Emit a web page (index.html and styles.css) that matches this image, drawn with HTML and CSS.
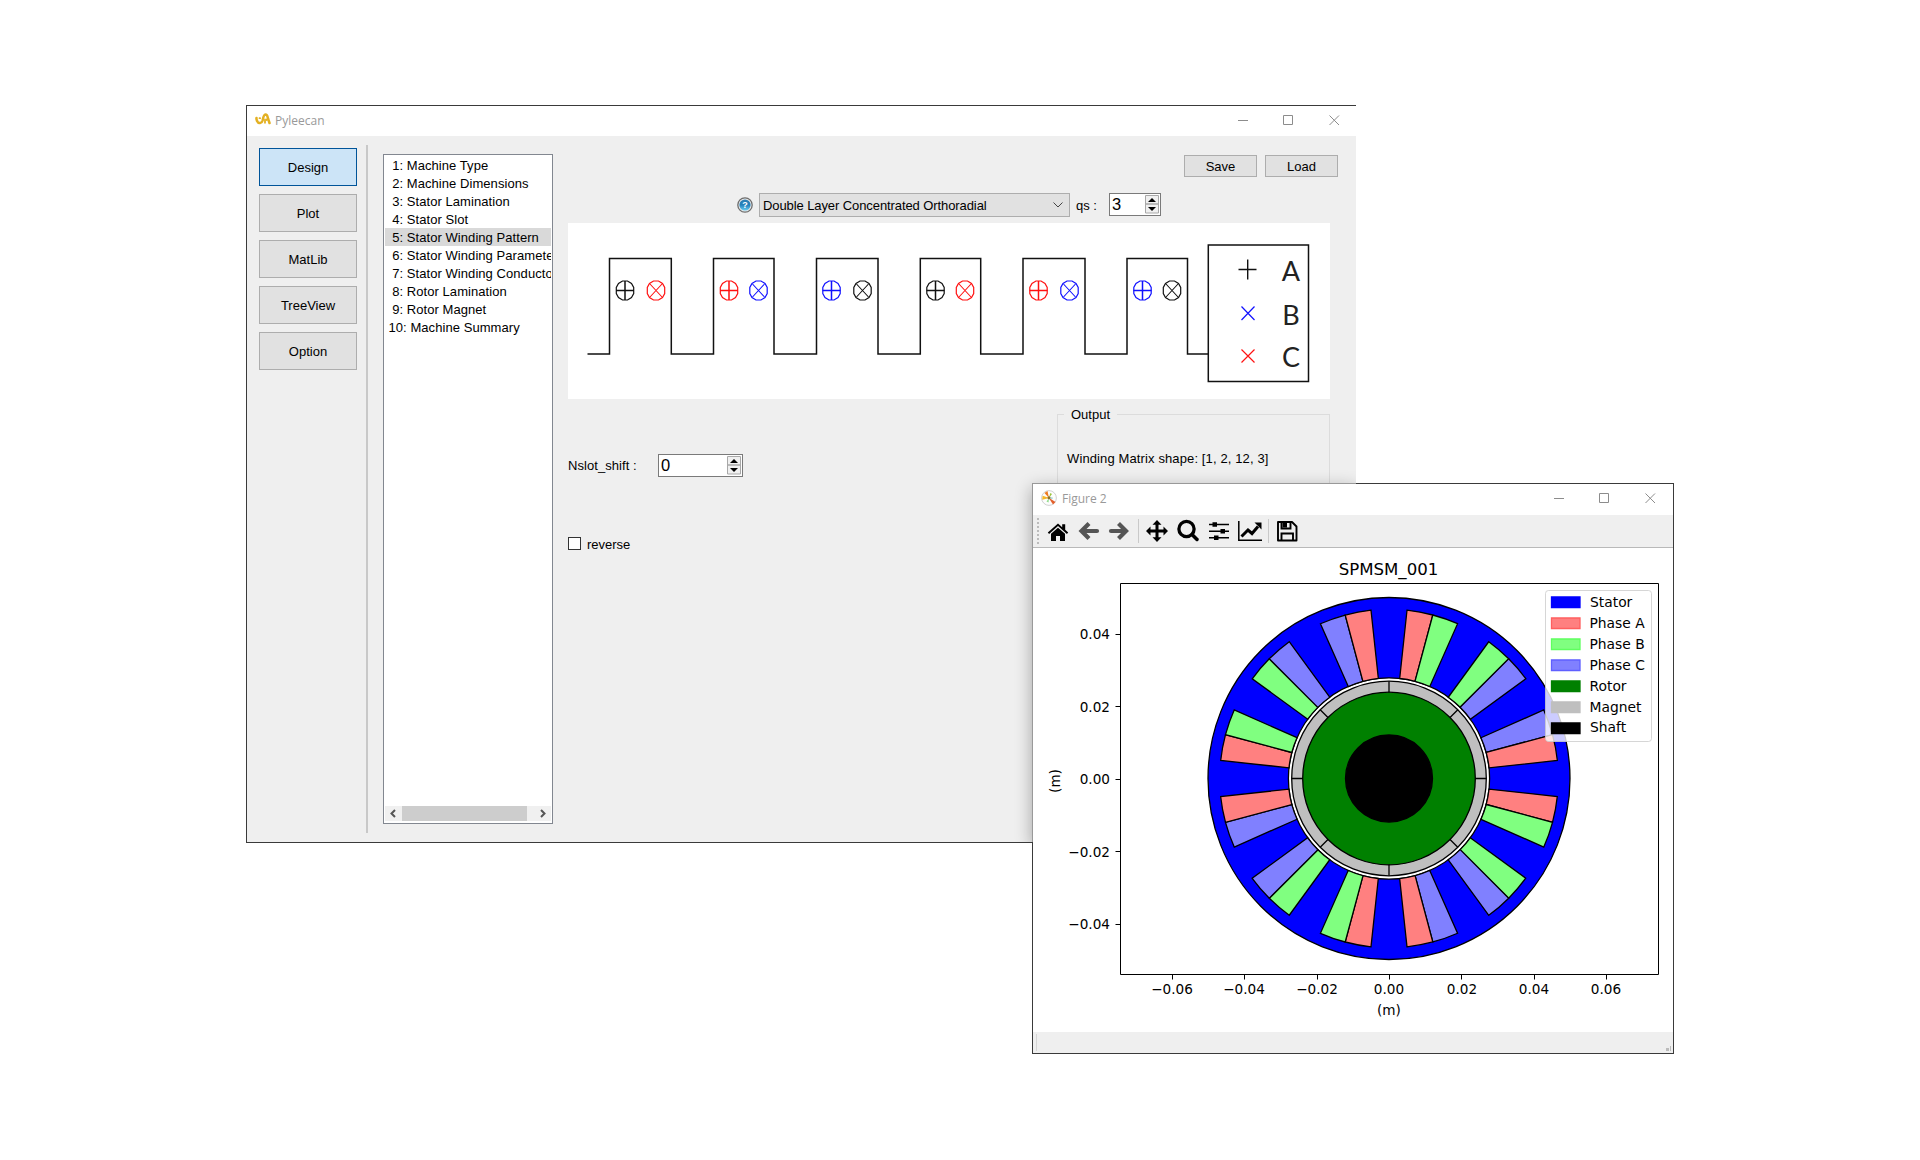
FILE: index.html
```html
<!DOCTYPE html>
<html lang="en">
<head>
<meta charset="utf-8">
<title>Pyleecan</title>
<link rel="stylesheet" href="styles.css">
</head>
<body>
<div class="desktop">

<section class="window main-window">
  <header class="titlebar">
    <svg class="app-icon" width="16" height="14" viewBox="0 0 16 14" fill="none" stroke="#e3b022" stroke-linecap="round">
      <path d="M1.500 5C1.300 6.500 1.500 7 2 7.500M2 8C3.500 11.200 6.800 10.500 7.600 7.500C8.200 4.500 8.600 1.800 10.500 1.600C12.300 1.500 12.500 3.500 13 5.500L14.500 10" stroke-width="2.500"/>
      <path d="M10 6.500v3.300M11.800 6.500v.6" stroke-width="1.800"/><path d="M4.500 5.200h.6" stroke-width="1.800"/>
    </svg>
    <h1 class="title">Pyleecan</h1>
    <svg class="controls" width="102" height="11" viewBox="0 0 102 11" fill="none" stroke="#8c8c8c"><path d="M0 5.500h10M45.500 .5h9v9h-9zM91.500 .5l9.500 9.500M101 .5l-9.500 9.500"/></svg>
  </header>
  <div class="body">
    <nav class="nav">
      <button class="btn active">Design</button>
      <button class="btn">Plot</button>
      <button class="btn">MatLib</button>
      <button class="btn">TreeView</button>
      <button class="btn">Option</button>
    </nav>
    <div class="divider"></div>
    <div class="steps">
      <ul class="step-list">
        <li> 1: Machine Type</li>
        <li> 2: Machine Dimensions</li>
        <li> 3: Stator Lamination</li>
        <li> 4: Stator Slot</li>
        <li class="selected"> 5: Stator Winding Pattern</li>
        <li> 6: Stator Winding Parameters</li>
        <li> 7: Stator Winding Conductor</li>
        <li> 8: Rotor Lamination</li>
        <li> 9: Rotor Magnet</li>
        <li>10: Machine Summary</li>
      </ul>
      <div class="scrollbar">
        <svg width="17" height="15" viewBox="0 0 17 15" fill="none" stroke="#555" stroke-width="2"><path d="M10 4L6.500 7.500 10 11"/></svg>
        <div class="thumb"></div>
        <svg class="right" width="17" height="15" viewBox="0 0 17 15" fill="none" stroke="#555" stroke-width="2"><path d="M7 4l3.500 3.500L7 11"/></svg>
      </div>
    </div>
    <div class="content">
      <div class="actions"><button class="btn">Save</button><button class="btn">Load</button></div>
      <div class="pattern-row">
        <svg class="help" width="16" height="16" viewBox="0 0 16 16">
          <defs><linearGradient id="ball" x2="0" y2="1"><stop stop-color="#2f7fb4"/><stop offset=".5" stop-color="#2580ba"/><stop offset="1" stop-color="#6cd0f4"/></linearGradient></defs>
          <circle cx="8" cy="8" r="7.200" fill="#e9e9e9" stroke="#6e6e6e" stroke-width="1.300"/>
          <circle cx="8" cy="8" r="5.600" fill="url(#ball)"/>
          <text x="8" y="11" text-anchor="middle" class="help-mark">?</text>
        </svg>
        <div class="combo"><span>Double Layer Concentrated Orthoradial</span>
          <svg width="10" height="6" viewBox="0 0 10 6" fill="none" stroke="#444"><path d="M.5 .5L5 5 9.500 .5"/></svg></div>
        <label class="qs">qs :</label>
        <div class="spin small"><span>3</span>
          <svg width="14" height="19" viewBox="0 0 14 19"><path d="M.5 .5h13v8.500h-13zM.5 9h13v9h-13z" fill="#f0f0f0" stroke="#a8a8a8"/><path d="M3 7l4-4 4 4zM3 12h8l-4 4z"/></svg></div>
      </div>
      <svg class="winding" width="762" height="176" viewBox="568 223 762 176">
        <defs>
          <g id="ring"><path d="M-2.500-9.500h5L6.500-7 8.700-3V3L6.500 7 2.500 9.500h-5L-6.500 7-8.700 3V-3L-6.500-7z"/></g>
          <g id="plus"><use href="#ring"/><path d="M-9 0H9M0-9.500V9.500" stroke-width="1.500"/></g>
          <g id="cross"><use href="#ring"/><path d="M-6-6.500L6 6.500M6-6.500L-6 6.500" stroke-width="1.100"/></g>
        </defs>
        <g fill="none" stroke="#111" stroke-width="1.500">
          <path d="M587.500 354H609.500V258.500H671.300V354H713.500V258.500H774V354H816.500V258.500H878V354H920.300V258.500H980.700V354H1023V258.500H1085V354H1127V258.500H1187.500V354H1208"/>
          <path d="M1208.300 245H1308.500V381.500H1208.300z"/>
        </g>
        <g fill="none" stroke="#111" stroke-width="1.200">
          <use href="#plus" x="625" y="290.500"/><use href="#cross" x="862.500" y="290.500"/>
          <use href="#plus" x="935.500" y="290.500"/><use href="#cross" x="1172" y="290.500"/>
          <path d="M1238.500 269.500h18M1247.700 259.500v20" stroke-width="1.400"/>
        </g>
        <g fill="none" stroke="#f11" stroke-width="1.200">
          <use href="#cross" x="656" y="290.500"/><use href="#plus" x="729" y="290.500"/>
          <use href="#cross" x="965" y="290.500"/><use href="#plus" x="1038.500" y="290.500"/>
          <path d="M1241.500 349.500l13 13M1254.500 349.500l-13 13"/>
        </g>
        <g fill="none" stroke="#11f" stroke-width="1.200">
          <use href="#cross" x="758.500" y="290.500"/><use href="#plus" x="831.500" y="290.500"/>
          <use href="#cross" x="1069.500" y="290.500"/><use href="#plus" x="1142.500" y="290.500"/>
          <path d="M1241.500 306.500l13 13.500M1254.500 306.500l-13 13.500"/>
        </g>
        <g class="phase-names" text-anchor="middle"><text x="1291" y="280.500">A</text><text x="1291" y="324.500">B</text><text x="1291" y="367">C</text></g>
      </svg>
      <div class="lower">
        <div class="form">
          <div class="shift-row"><label>Nslot_shift :</label>
            <div class="spin"><span>0</span>
              <svg width="14" height="19" viewBox="0 0 14 19"><path d="M.5 .5h13v8.500h-13zM.5 9h13v9h-13z" fill="#f0f0f0" stroke="#a8a8a8"/><path d="M3 7l4-4 4 4zM3 12h8l-4 4z"/></svg></div>
          </div>
          <div class="check-row"><span class="checkbox"></span><label>reverse</label></div>
        </div>
        <fieldset class="output"><legend>Output</legend><p>Winding Matrix shape: [1, 2, 12, 3]</p></fieldset>
      </div>
    </div>
  </div>
</section>

<section class="window figure-window">
  <header class="titlebar">
    <svg class="fig-icon" width="16" height="16" viewBox="0 0 16 16">
      <circle cx="8" cy="8" r="7.400" fill="#fdfdfd" stroke="#c4c4c4" stroke-width=".8"/>
      <path d="M8 8L3.500 3 6.500 1z" fill="#ef7a22"/><path d="M8.500 8L1.200 9.800 1.600 5.800z" fill="#f4b62a"/><path d="M7.500 7.500L12 14.500 14.500 12z" fill="#e2602c"/><path d="M8 8L9.300 3 11 4z" fill="#9bc53d"/><path d="M8 8L5.500 11.500 7.500 12.500z" fill="#8fdc8a"/><path d="M8 8L11.500 7.300 11.500 9z" fill="#8cc"/><circle cx="8" cy="7.800" r="1.500" fill="#8a6d2e"/>
    </svg>
    <h2 class="title">Figure 2</h2>
    <svg class="controls" width="102" height="11" viewBox="0 0 102 11" fill="none" stroke="#8c8c8c"><path d="M0 5.500h10M45.500 .5h9v9h-9zM91.500 .5l9.500 9.500M101 .5l-9.500 9.500"/></svg>
  </header>
  <div class="toolbar">
    <span class="grip"></span>
    <svg width="24" height="24" viewBox="0 0 24 24"><path d="M12 4.500l4.200 3.700V5.200h3v5.600l3 2.700-1.300 1.400L12 7.100l-8.900 7.800-1.300-1.400z"/><path d="M12 8.700l7 6.100V22h-5v-5h-4v5H5v-7.200z"/></svg>
    <svg width="24" height="24" viewBox="0 0 24 24" fill="none" stroke="#555" stroke-width="4.200" stroke-linecap="round"><path d="M20 12H6"/><path d="M12 4.500L4.500 12l7.500 7.500" stroke-linecap="butt"/></svg>
    <svg width="24" height="24" viewBox="0 0 24 24" fill="none" stroke="#555" stroke-width="4.200" stroke-linecap="round"><path d="M3 12h14"/><path d="M10.500 4.500L18 12l-7.500 7.500" stroke-linecap="butt"/></svg>
    <span class="sep"></span>
    <svg width="24" height="24" viewBox="0 0 24 24"><path d="M12 1l4.500 4.700h-3v4.800h5v-3L23 12l-4.500 4.500v-3h-5v4.800h3L12 23l-4.500-4.700h3v-4.800h-5v3L1 12l4.500-4.500v3h5V5.700h-3z"/></svg>
    <svg width="24" height="24" viewBox="0 0 24 24" fill="none" stroke="#000"><circle cx="10.500" cy="10" r="7.600" stroke-width="3.300"/><path d="M16 15.500l5 5" stroke-width="3.500" stroke-linecap="round"/></svg>
    <svg width="24" height="24" viewBox="0 0 24 24"><path d="M2 5.500h20M2 12.200h20M2 18.800h20" stroke="#000" stroke-width="1.600"/><path d="M5.500 3.200h4.500v4.500H5.500zM13.500 10H18v4.500h-4.500zM7 16.500h4.500v4.500H7z"/></svg>
    <svg width="24" height="24" viewBox="0 0 24 24"><path d="M.8 2v19.300H24" fill="none" stroke="#000" stroke-width="1.500"/><path d="M3.500 17.500L10 11l4 3.500 6-7" fill="none" stroke="#000" stroke-width="3"/><path d="M16.500 3.500H23.500v7z"/></svg>
    <span class="sep"></span>
    <svg width="24" height="24" viewBox="0 0 24 24" fill="none" stroke="#000" stroke-width="1.900"><path d="M3 3h14l4.500 4.500V21.500H3z" stroke-linejoin="round"/><path d="M6.500 21v-6.500h11.500V21M6.500 3.500V9.500h9V3.500"/><path d="M7.500 4h4.500v4.500H7.500z" fill="#000" stroke="none"/></svg>
  </div>
  <svg class="plot" width="640" height="484" viewBox="1033 548 640 484">
    <defs>
      <path id="left" d="M10.700-100L18-168.300A169.300 169.300 0 0 1 43.800-163.500L26-97.200A100.600 100.600 0 0 0 10.700-100z"/>
      <path id="right" d="M26-97.200L43.800-163.500A169.300 169.300 0 0 1 68.600-154.800L40.800-92A100.600 100.600 0 0 0 26-97.200z"/>
      <g id="slots">
        <use href="#left" class="pa"/><use href="#right" class="pb"/>
        <g transform="rotate(30)"><use href="#left" class="pb"/><use href="#right" class="pc"/></g>
        <g transform="rotate(60)"><use href="#left" class="pc"/><use href="#right" class="pa"/></g>
      </g>
    </defs>
    <text class="plot-title" x="1388.500" y="574.500" text-anchor="middle">SPMSM_001</text>
    <g transform="translate(1389 778.500)" stroke="#000" stroke-width="1.300">
      <circle r="181" fill="#00f"/>
      <circle r="100.600" fill="#fff"/>
      <use href="#slots"/><use href="#slots" transform="rotate(90)"/><use href="#slots" transform="rotate(180)"/><use href="#slots" transform="rotate(270)"/>
      <circle r="97.300" fill="#bfbfbf"/>
      <path d="M0-97.300V97.300M-97.300 0H97.300M-68.800-68.800L68.800 68.800M68.800-68.800L-68.800 68.800"/>
      <circle r="86.300" fill="green"/>
      <circle r="43.500" fill="#000"/>
    </g>
    <path d="M1120.500 583.500H1658.500V974.500H1120.500zM1172.500 975v4.500M1244.500 975v4.500M1317.500 975v4.500M1389.500 975v4.500M1461.500 975v4.500M1534.500 975v4.500M1606.500 975v4.500M1120 634.500h-4.500M1120 706.500h-4.500M1120 779.500h-4.500M1120 851.500h-4.500M1120 924.500h-4.500" fill="none" stroke="#000"/>
    <g class="tick" text-anchor="middle">
      <text x="1172" y="994">−0.06</text><text x="1244" y="994">−0.04</text><text x="1317" y="994">−0.02</text><text x="1389" y="994">0.00</text><text x="1462" y="994">0.02</text><text x="1534" y="994">0.04</text><text x="1606" y="994">0.06</text>
      <text x="1389" y="1015">(m)</text>
      <text transform="translate(1060 781) rotate(-90)">(m)</text>
    </g>
    <g class="tick" text-anchor="end">
      <text x="1110" y="639">0.04</text><text x="1110" y="711.500">0.02</text><text x="1110" y="784">0.00</text><text x="1110" y="856.500">−0.02</text><text x="1110" y="929">−0.04</text>
    </g>
    <rect x="1545.500" y="590.500" width="106" height="151" rx="3" fill="#fff" fill-opacity=".8" stroke="#ccc" stroke-opacity=".8"/>
    <g stroke-width="1.300">
      <path d="M1551.500 597h28.500v10.500h-28.500z" fill="#00f" stroke="#00f"/>
      <path d="M1551.500 618h28.500v10.500h-28.500z" fill="#ff8080" stroke="#ff5f5f"/>
      <path d="M1551.500 639h28.500v10.500h-28.500z" fill="#80ff80" stroke="#5fff5f"/>
      <path d="M1551.500 660h28.500v10.500h-28.500z" fill="#8080ff" stroke="#5f5fff"/>
      <path d="M1551.500 681h28.500v10.500h-28.500z" fill="green" stroke="green"/>
      <path d="M1551.500 702h28.500v10.500h-28.500z" fill="#bfbfbf" stroke="#bfbfbf"/>
      <path d="M1551.500 723h28.500v10.500h-28.500z" fill="#000" stroke="#000"/>
    </g>
    <g class="tick legend">
      <text x="1590" y="607">Stator</text><text x="1589.500" y="628">Phase A</text><text x="1589.500" y="649">Phase B</text><text x="1589.500" y="670">Phase C</text><text x="1589.500" y="691">Rotor</text><text x="1589.500" y="712">Magnet</text><text x="1590" y="732">Shaft</text>
    </g>
  </svg>
  <footer class="statusbar"><span class="size-grip"></span></footer>
</section>
<div class="overlap-shadow"></div>
</div>
</body>
</html>
```

FILE: styles.css
```css
* { box-sizing: border-box; }
body { margin: 0; background: #fff; font: 13px "Liberation Sans", Arial, sans-serif; color: #000; }
.desktop { position: relative; width: 1920px; height: 1160px; overflow: hidden; }
svg { display: block; flex: none; }

.window { position: absolute; display: flex; flex-direction: column; background: #efefef; border: 1px solid #3a3a3a; }
.main-window { left: 246px; top: 105px; width: 1110px; height: 738px; border-right: 0; }
.figure-window { left: 1032px; top: 483px; width: 642px; height: 571px; }
.overlap-shadow {
  position: absolute; left: 1032px; top: 483px; width: 324px; height: 359px;
  border: solid #999; border-width: 1px 0 0 1px;
  box-shadow: 0 5px 16px rgba(0, 0, 0, .32);
  clip-path: inset(-30px 0 0 -30px);
}

.titlebar { display: flex; align-items: center; flex: none; background: #fff; }
.main-window .titlebar { height: 30px; padding: 0 16px 2px 8px; }
.figure-window .titlebar { height: 31px; padding: 0 17px 2px 8px; }
.title { margin: 0; font: 12px "Open Sans", "Noto Sans", sans-serif; color: #999; }
.app-icon { margin-right: 4px; }
.fig-icon { margin-right: 5px; margin-top: -1px; }
.controls { margin-left: auto; }
.figure-window .controls { margin-top: -1px; }

.body { display: flex; height: 706px; }
.btn { padding: 0; border: 1px solid #adadad; border-radius: 0; background: #e1e1e1; font: inherit; color: #000; }
.nav { display: flex; flex-direction: column; gap: 8px; width: 110px; padding: 12px 0 0 12px; }
.nav .btn { height: 38px; }
.nav .active { background: #cce4f7; border-color: #005499; }
.divider { width: 2px; height: 688px; margin: 9px 0 0 9px; background: #c8c8c8; }

.steps { display: flex; flex-direction: column; flex: none; width: 170px; height: 670px; margin: 18px 0 0 15px; padding: 1px 1px 2px; border: 1px solid #828790; background: #fff; }
.step-list { flex: 1; margin: 0; padding: 0; list-style: none; overflow: hidden; }
.step-list li { height: 18px; padding-left: 3.500px; padding-top: 1px; line-height: 18px; letter-spacing: .06px; white-space: pre; }
.step-list .selected { background: #d9d9d9; }
.scrollbar { display: flex; height: 15px; background: #f0f0f0; }
.thumb { width: 125px; background: #cdcdcd; }
.scrollbar .right { margin-left: auto; }

.content { display: flex; flex-direction: column; flex: none; width: 770px; margin-left: 15px; padding-top: 19px; }
.actions { display: flex; justify-content: flex-end; gap: 8px; }
.actions .btn { width: 73px; height: 22px; }
.pattern-row { display: flex; align-items: flex-start; height: 24px; margin-top: 16px; padding-left: 169px; }
.help { margin-top: 4px; }
.help-mark { font: bold 9px "Liberation Sans", sans-serif; fill: #fff; }
.combo { display: flex; align-items: center; justify-content: space-between; width: 311px; height: 24px; margin-left: 6px; padding: 0 6px 0 3px; border: 1px solid #adadad; background: #e1e1e1; letter-spacing: -.09px; }
.qs { width: 39px; padding-left: 6px; line-height: 25px; }
.spin { display: flex; justify-content: space-between; width: 85px; height: 23px; padding: 1px 1px 1px 2px; border: 1px solid #7a7a7a; background: #fff; font-size: 16.500px; line-height: 19px; }
.spin.small { width: 52px; }
.winding { margin-top: 6px; background: #fff; }
.phase-names { font: 400 27px Lato, sans-serif; fill: #222; }

.lower { display: flex; width: 762px; height: 280px; justify-content: space-between; }
.form { padding-top: 55px; }
.shift-row { display: flex; height: 23px; }
.shift-row label { width: 90px; line-height: 24px; letter-spacing: .06px; }
.check-row { display: flex; gap: 6px; margin-top: 60px; line-height: 15px; }
.checkbox { width: 13px; height: 13px; border: 1px solid #333; background: #fff; }
.output { width: 273px; height: 272px; margin: 8px 0 0; padding: 0 9px; border: 1px solid #dcdcdc; }
.output legend { margin-left: -3px; padding: 0 7px; line-height: 15px; }
.output p { margin: 29px 0 0; line-height: 15px; letter-spacing: .12px; }

.toolbar { display: flex; align-items: center; flex: none; gap: 7px; height: 33px; padding-left: 4px; border-bottom: 1px solid #b9b9b9; }
.grip { width: 2px; height: 26px; background: repeating-linear-gradient(#bbb 0 2px, transparent 2px 4px); }
.sep { width: 1px; height: 24px; margin: 0 -1px; background: #c9c9c9; }
.plot { background: #fff; }
.plot-title { font: 16.600px "DejaVu Sans", sans-serif; }
.tick { font: 13.600px "DejaVu Sans", sans-serif; }
.legend { font-size: 13.850px; }
.pa { fill: #ff8080; }
.pb { fill: #80ff80; }
.pc { fill: #8080ff; }
.statusbar { display: flex; align-items: flex-end; justify-content: space-between; height: 21px; padding: 2px; }
.statusbar::before { content: ""; width: 1px; height: 17px; margin-left: 1px; background: #d5d5d5; }
.size-grip { width: 5px; height: 5px; background: linear-gradient(#bbb, #bbb) 0 100% / 3px 3px no-repeat; border-right: 1px solid #bbb; }
```
